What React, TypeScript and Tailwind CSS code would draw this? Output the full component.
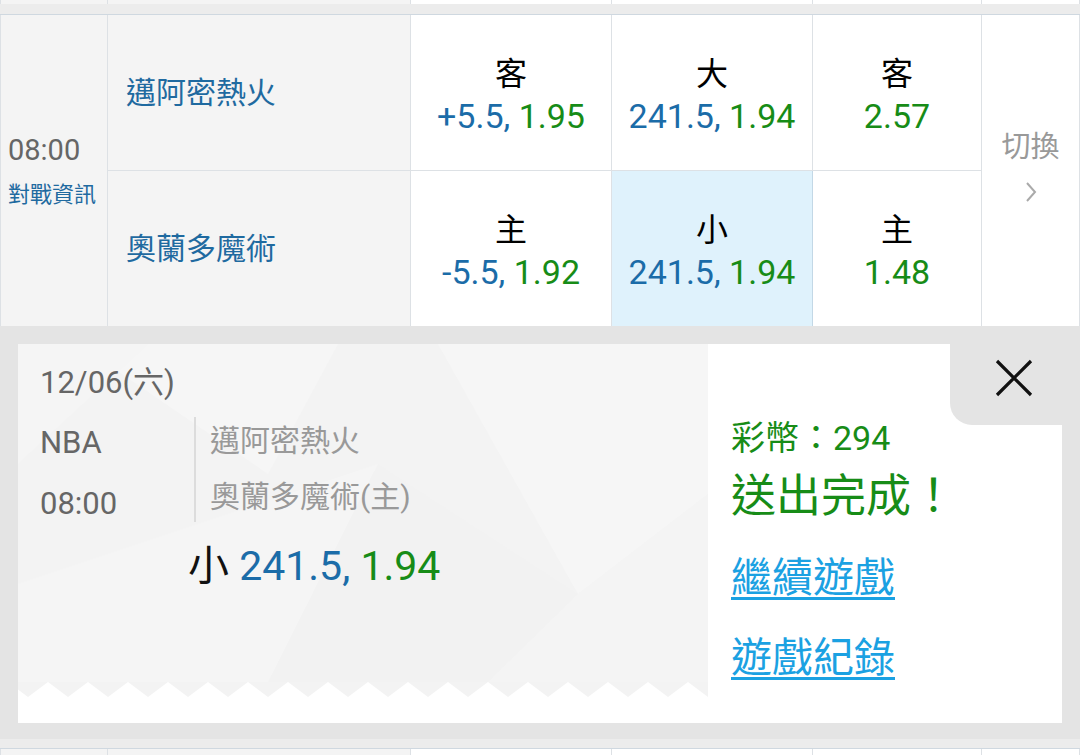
import React from 'react';

const font = "font-['Roboto','Noto_Sans_CJK_TC',sans-serif]";

type OddProps = {
    label: string;
    line?: string;
    price: string;
    selected?: boolean;
};

const OddCell: React.FC<OddProps> = ({ label, line, price, selected }) => (
    <div
        className={
            'flex flex-col items-center justify-center h-full pt-[6px] border-r border-[#dde1e5] ' +
            (selected ? 'bg-[#dff2fc] border-r-[#c3d8e6]' : 'bg-white')
        }
    >
        <div className="text-[32px] leading-[42px] text-black">{label}</div>
        <div className="text-[34px] leading-[43px] whitespace-nowrap">
            {line && <span className="text-[#1b6ca8]">{line}, </span>}
            <span className="text-[#178c17]">{price}</span>
        </div>
    </div>
);

// bottom strip of the previous / next match row
const RowEdge: React.FC<{ h: string }> = ({ h }) => (
    <div className={'flex ' + h}>
        <div className="w-[108px] bg-[#f4f4f4] border-r border-l border-[#dde1e5]"></div>
        <div className="w-[303px] bg-[#f4f4f4] border-r border-[#dde1e5]"></div>
        <div className="w-[201px] bg-white border-r border-[#dde1e5]"></div>
        <div className="w-[201px] bg-white border-r border-[#dde1e5]"></div>
        <div className="w-[169px] bg-white border-r border-[#dde1e5]"></div>
        <div className="flex-1 bg-white border-r border-[#dde1e5]"></div>
    </div>
);

const PanelBackground: React.FC = () => {
    // zigzag bottom edge of the grey ticket area
    const pts: string[] = [];
    for (let x = 0; x <= 700; x += 20) {
        pts.push(`${690 - x},${(x / 20) % 2 === 0 ? 353 : 338}`);
    }
    return (
        <svg className="absolute inset-0" width="690" height="379" viewBox="0 0 690 379">
            <polygon points={`0,0 690,0 ${pts.join(' ')}`} fill="#f3f3f3" />
            <polygon points="60,0 320,0 250,130" fill="#f6f6f6" />
            <polygon points="0,120 130,0 0,0" fill="#f5f5f5" />
            <polygon points="420,0 690,0 690,150 560,250" fill="#f6f6f6" />
            <polygon points="0,240 360,120 250,338 0,338" fill="#f5f5f5" />
            <polygon points="360,120 560,250 470,338 250,338" fill="#f2f2f2" />
            <polygon points="560,250 690,150 690,338 470,338" fill="#f4f4f4" />
        </svg>
    );
};

const App: React.FC = () => {
    return (
        <div className={'w-[1080px] h-[755px] overflow-hidden bg-[#e4e4e4] ' + font}>
            {/* previous row + separator */}
            <RowEdge h="h-[4px]" />
            <div className="h-[11px] bg-[#ececec] border-b border-[#cfd8e0]"></div>

            {/* match row */}
            <div className="flex h-[311px]">
                <div className="w-[108px] bg-[#f4f4f4] border-l border-r border-[#dde1e5] flex flex-col justify-center pl-[7px] pb-[1px]">
                    <div className="text-[29px] leading-[40px] text-[#666]">08:00</div>
                    <div className="text-[22px] leading-[30px] text-[#1f6aa0] mt-[10px] whitespace-nowrap">對戰資訊</div>
                </div>
                <div className="w-[874px] flex flex-col">
                    <div className="flex h-[156px] border-b border-[#dde1e5]">
                        <div className="w-[303px] bg-[#f4f4f4] border-r border-[#dde1e5] flex items-center pl-[18px] text-[30px] text-[#1f6aa0]">
                            邁阿密熱火
                        </div>
                        <div className="w-[201px]"><OddCell label="客" line="+5.5" price="1.95" /></div>
                        <div className="w-[201px]"><OddCell label="大" line="241.5" price="1.94" /></div>
                        <div className="w-[169px]"><OddCell label="客" price="2.57" /></div>
                    </div>
                    <div className="flex h-[155px]">
                        <div className="w-[303px] bg-[#f4f4f4] border-r border-[#dde1e5] flex items-center pl-[18px] text-[30px] text-[#1f6aa0]">
                            奧蘭多魔術
                        </div>
                        <div className="w-[201px]"><OddCell label="主" line="-5.5" price="1.92" /></div>
                        <div className="w-[201px]"><OddCell label="小" line="241.5" price="1.94" selected /></div>
                        <div className="w-[169px]"><OddCell label="主" price="1.48" /></div>
                    </div>
                </div>
                <div className="flex-1 bg-white border-r border-[#dde1e5] flex flex-col items-center justify-center pb-[10px]">
                    <div className="text-[29px] leading-[40px] text-[#999]">切換</div>
                    <svg className="mt-[13px]" width="14" height="24" viewBox="0 0 14 24">
                        <polyline points="3,3 11,12 3,21" fill="none" stroke="#aaa" strokeWidth="2" />
                    </svg>
                </div>
            </div>

            {/* bet confirmation */}
            <div className="px-[18px] pt-[18px] pb-[16px]">
                <div className="flex h-[379px] bg-white">
                    <div className="relative w-[690px]">
                        <PanelBackground />
                        <div className="relative pl-[22px] pt-[19px]">
                            <div className="text-[31px] leading-[40px] text-[#666]">12/06(六)</div>
                            <div className="flex mt-[14px]">
                                <div className="w-[154px] text-[31px] text-[#666]">
                                    <div className="leading-[52px]">NBA</div>
                                    <div className="leading-[52px] mt-[9px]">08:00</div>
                                </div>
                                <div className="h-[105px] border-l-2 border-[#dcdcdc] pl-[14px] text-[30px] text-[#999]">
                                    <div className="leading-[48px]">邁阿密熱火</div>
                                    <div className="leading-[48px] mt-[8px]">奧蘭多魔術(主)</div>
                                </div>
                            </div>
                            <div className="ml-[148px] mt-[11px] text-[41px] leading-[50px] whitespace-nowrap">
                                <span className="text-[#111]">小 </span>
                                <span className="text-[#1b6ca8]">241.5, </span>
                                <span className="text-[#178c17]">1.94</span>
                            </div>
                        </div>
                    </div>
                    <div className="relative flex-1 pl-[23px] pt-[74px]">
                        <button className="absolute top-0 right-0 w-[112px] h-[81px] bg-[#e4e4e4] rounded-bl-[22px] flex items-start justify-start pl-[45px] pt-[15px]">
                            <svg width="38" height="38" viewBox="0 0 38 38">
                                <path d="M2 2 L36 36 M36 2 L2 36" stroke="#111" strokeWidth="3.2" />
                            </svg>
                        </button>
                        <div className="text-[34px] leading-[40px] text-[#178c17]">彩幣：294</div>
                        <div className="mt-[11px] text-[45px] leading-[56px] text-[#178c17]">送出完成！</div>
                        <div className="mt-[27px] text-[41px] leading-[52px] text-[#1ba1e2] underline decoration-[3px] underline-offset-[5px]">
                            繼續遊戲
                        </div>
                        <div className="mt-[28px] text-[41px] leading-[52px] text-[#1ba1e2] underline decoration-[3px] underline-offset-[5px]">
                            遊戲紀錄
                        </div>
                    </div>
                </div>
            </div>

            {/* next row */}
            <div className="h-[10px] bg-[#ececec] border-b border-[#cfd8e0]"></div>
            <RowEdge h="h-[6px]" />
        </div>
    );
};

export default App;
